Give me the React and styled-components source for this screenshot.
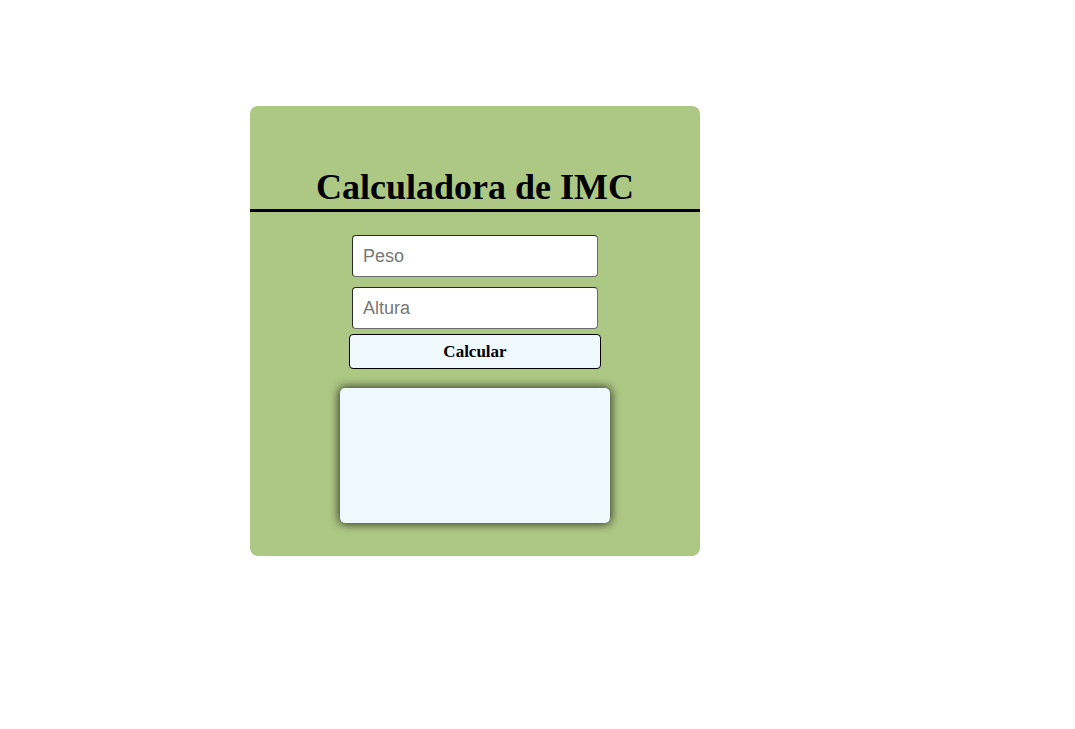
import styled, { createGlobalStyle } from "styled-components";

const GlobalStyle = createGlobalStyle`
  body {
    margin: 0;
    background: #fff;
    font-family: "Liberation Serif", "Times New Roman", serif;
  }
`;

const Page = styled.div`
  padding: 106px 0 0 250px;
`;

const Card = styled.div`
  width: 450px;
  height: 450px;
  box-sizing: border-box;
  padding-top: 60px;
  background-color: #adc784;
  border-radius: 8px;
  display: flex;
  flex-direction: column;
  align-items: center;
`;

const Title = styled.h1`
  align-self: stretch;
  margin: 0;
  font-size: 36px;
  line-height: 43px;
  font-weight: bold;
  text-align: center;
  color: #000;
  border-bottom: 3px solid #000;
`;

const Form = styled.form`
  margin-top: 23px;
  display: flex;
  flex-direction: column;
  align-items: center;
  gap: 10px;
`;

const Input = styled.input`
  width: 246px;
  height: 42px;
  box-sizing: border-box;
  padding: 0 10px;
  border: 1px solid #6b6b6b;
  border-top-color: #2a2a2a;
  border-left-color: #2a2a2a;
  border-radius: 4px;
  background: #fff;
  font-family: "Liberation Sans", Arial, sans-serif;
  font-size: 18px;
  color: #222;

  &::placeholder {
    color: #777;
  }
`;

const Button = styled.button`
  width: 252px;
  height: 35px;
  margin-top: -5px;
  box-sizing: border-box;
  border: 1px solid #000;
  border-radius: 4px;
  background-color: #eff7ff;
  font-family: "Liberation Serif", "Times New Roman", serif;
  font-size: 17px;
  font-weight: bold;
  color: #000;
  cursor: pointer;
`;

const Result = styled.div`
  width: 270px;
  height: 135px;
  margin-top: 19px;
  border-radius: 5px;
  background-color: #eff7ff;
  box-shadow: 0 0 10px 1px rgba(0, 0, 0, 0.75);
`;

function App() {
  return (
    <>
      <GlobalStyle />
      <Page>
        <Card>
          <Title>Calculadora de IMC</Title>
          <Form onSubmit={(e) => e.preventDefault()}>
            <Input type="number" placeholder="Peso" />
            <Input type="number" placeholder="Altura" />
            <Button type="submit">Calcular</Button>
          </Form>
          <Result />
        </Card>
      </Page>
    </>
  );
}

export default App;
